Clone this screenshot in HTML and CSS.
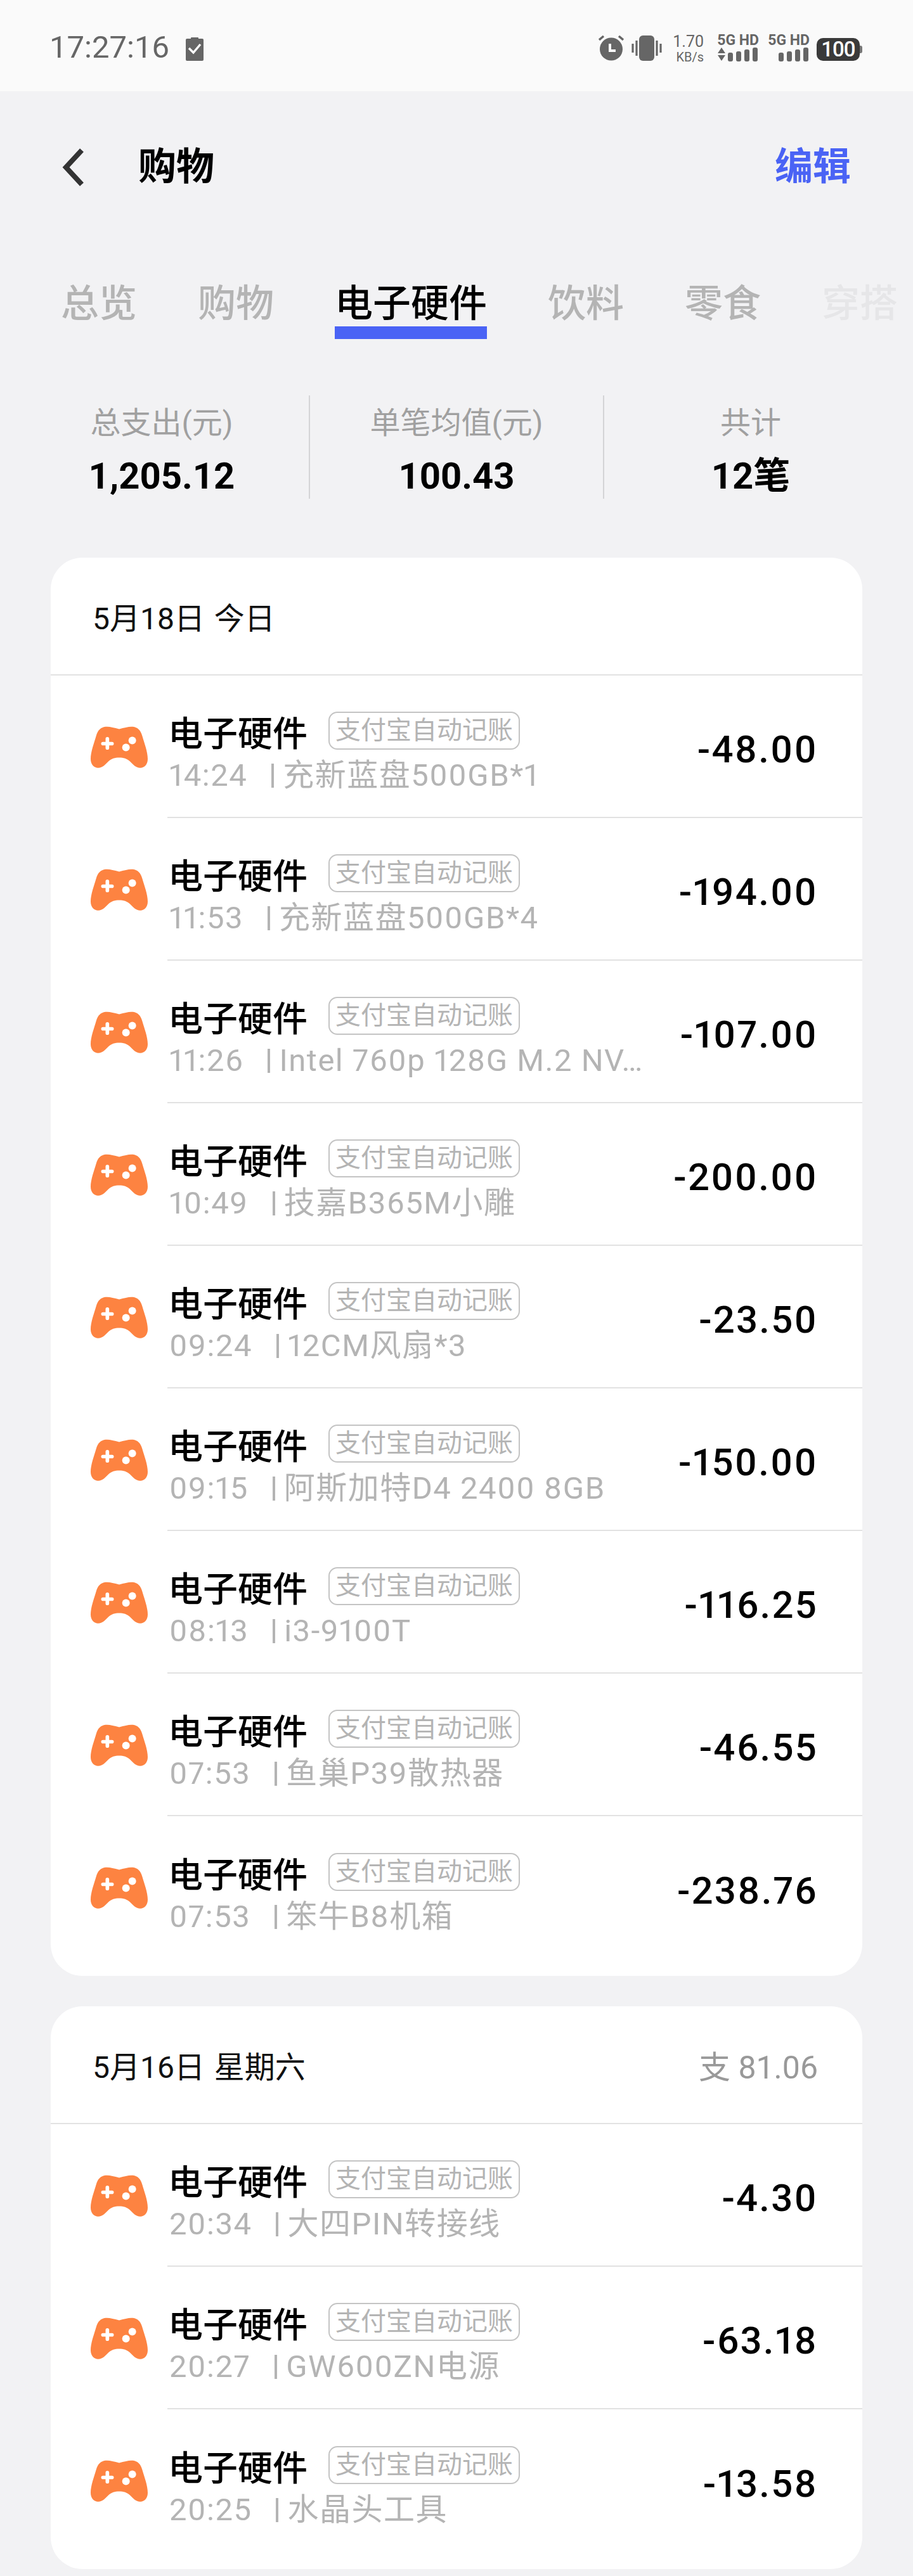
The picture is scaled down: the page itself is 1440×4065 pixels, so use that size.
FILE: index.html
```html
<!DOCTYPE html>
<html lang="zh-CN">
<head>
<meta charset="utf-8">
<title>购物</title>
<link rel="stylesheet" href="styles.css">
</head>
<body>
<div class="status">
  <div class="status-left">
    <span class="clock">17:27:16</span>
    <svg class="ic-batcheck" viewBox="0 0 28 40"><path fill="#666" d="M9 3h10a1 1 0 0 1 1 1v1h6a2 2 0 0 1 2 2v31a2 2 0 0 1-2 2H2a2 2 0 0 1-2-2V7a2 2 0 0 1 2-2h6V4a1 1 0 0 1 1-1z"/><path fill="none" stroke="#fff" stroke-width="3.4" d="M5 20l7 7 11-13"/></svg>
  </div>
  <div class="status-right">
    <svg class="ic-alarm" viewBox="0 0 40 40"><circle cx="20" cy="21.500" r="18" fill="#666"/><path stroke="#666" stroke-width="3.400" d="M1 7l7-6M39 7l-7-6"/><path fill="none" stroke="#fff" stroke-width="4" d="M18 13v11h9"/></svg>
    <svg class="ic-vib" viewBox="0 0 48 40"><rect x="12" y="0" width="24" height="40" rx="6" fill="#666"/><path stroke="#666" stroke-width="3.200" d="M2 13v14M8 8v24M40 8v24M46 13v14"/></svg>
    <div class="speed"><span class="speed-v">1.70</span><span class="speed-u">KB/s</span></div>
    <div class="sig">
      <span class="sig-t">5G HD</span>
      <svg class="ic-bars" viewBox="0 0 66 22"><path fill="#666" d="M7 0l6 9H1zM7 21l6-9H1z"/><rect x="17" y="8" width="8" height="14" rx="3" fill="#666"/><rect x="30" y="6" width="8" height="16" rx="3" fill="#666"/><rect x="43" y="3" width="8" height="19" rx="3" fill="#666"/><rect x="56" y="0" width="8" height="22" rx="3" fill="#666"/></svg>
    </div>
    <div class="sig sig-b">
      <span class="sig-t">5G HD</span>
      <svg class="ic-bars" viewBox="0 0 66 22"><rect x="17" y="8" width="8" height="14" rx="3" fill="#666"/><rect x="30" y="6" width="8" height="16" rx="3" fill="#666"/><rect x="43" y="3" width="8" height="19" rx="3" fill="#666"/><rect x="56" y="0" width="8" height="22" rx="3" fill="#666"/></svg>
    </div>
    <div class="battery"><span class="battery-v">100</span></div>
  </div>
</div>

<div class="nav">
  <svg class="ic-back" viewBox="0 0 40 68"><path fill="none" stroke="#333" stroke-width="8" stroke-linejoin="miter" d="M33 7L8 34l25 27"/></svg>
  <span class="nav-title">购物</span>
  <span class="nav-edit">编辑</span>
</div>

<div class="tabs">
  <span class="tab">总览</span>
  <span class="tab">购物</span>
  <span class="tab tab-on">电子硬件</span>
  <span class="tab">饮料</span>
  <span class="tab">零食</span>
  <span class="tab tab-fade">穿搭</span>
</div>

<div class="stats">
  <div class="stat"><div class="stat-l">总支出(元)</div><div class="stat-v">1,205.12</div></div>
  <div class="stat"><div class="stat-l">单笔均值(元)</div><div class="stat-v">100.43</div></div>
  <div class="stat"><div class="stat-l">共计</div><div class="stat-v">12笔</div></div>
</div>

<section class="card">
  <header class="card-h"><span class="date">5月18日 今日</span></header>
  <div class="row"><svg class="pad" viewBox="0 0 270 197"><use href="#gamepad"/></svg><div class="main"><div class="body"><div class="t-line"><span class="t">电子硬件</span><span class="badge">支付宝自动记账</span></div><div class="sub"><span>14:24</span><i class="pipe"></i><span>充新蓝盘500GB*1</span></div></div><span class="amt">-48.00</span></div></div>
  <div class="row"><svg class="pad" viewBox="0 0 270 197"><use href="#gamepad"/></svg><div class="main"><div class="body"><div class="t-line"><span class="t">电子硬件</span><span class="badge">支付宝自动记账</span></div><div class="sub"><span>11:53</span><i class="pipe"></i><span>充新蓝盘500GB*4</span></div></div><span class="amt">-194.00</span></div></div>
  <div class="row"><svg class="pad" viewBox="0 0 270 197"><use href="#gamepad"/></svg><div class="main"><div class="body"><div class="t-line"><span class="t">电子硬件</span><span class="badge">支付宝自动记账</span></div><div class="sub"><span>11:26</span><i class="pipe"></i><span>Intel 760p 128G M.2 NV…</span></div></div><span class="amt">-107.00</span></div></div>
  <div class="row"><svg class="pad" viewBox="0 0 270 197"><use href="#gamepad"/></svg><div class="main"><div class="body"><div class="t-line"><span class="t">电子硬件</span><span class="badge">支付宝自动记账</span></div><div class="sub"><span>10:49</span><i class="pipe"></i><span>技嘉B365M小雕</span></div></div><span class="amt">-200.00</span></div></div>
  <div class="row"><svg class="pad" viewBox="0 0 270 197"><use href="#gamepad"/></svg><div class="main"><div class="body"><div class="t-line"><span class="t">电子硬件</span><span class="badge">支付宝自动记账</span></div><div class="sub"><span>09:24</span><i class="pipe"></i><span>12CM风扇*3</span></div></div><span class="amt">-23.50</span></div></div>
  <div class="row"><svg class="pad" viewBox="0 0 270 197"><use href="#gamepad"/></svg><div class="main"><div class="body"><div class="t-line"><span class="t">电子硬件</span><span class="badge">支付宝自动记账</span></div><div class="sub"><span>09:15</span><i class="pipe"></i><span>阿斯加特D4 2400 8GB</span></div></div><span class="amt">-150.00</span></div></div>
  <div class="row"><svg class="pad" viewBox="0 0 270 197"><use href="#gamepad"/></svg><div class="main"><div class="body"><div class="t-line"><span class="t">电子硬件</span><span class="badge">支付宝自动记账</span></div><div class="sub"><span>08:13</span><i class="pipe"></i><span>i3-9100T</span></div></div><span class="amt">-116.25</span></div></div>
  <div class="row"><svg class="pad" viewBox="0 0 270 197"><use href="#gamepad"/></svg><div class="main"><div class="body"><div class="t-line"><span class="t">电子硬件</span><span class="badge">支付宝自动记账</span></div><div class="sub"><span>07:53</span><i class="pipe"></i><span>鱼巢P39散热器</span></div></div><span class="amt">-46.55</span></div></div>
  <div class="row"><svg class="pad" viewBox="0 0 270 197"><use href="#gamepad"/></svg><div class="main"><div class="body"><div class="t-line"><span class="t">电子硬件</span><span class="badge">支付宝自动记账</span></div><div class="sub"><span>07:53</span><i class="pipe"></i><span>笨牛B8机箱</span></div></div><span class="amt">-238.76</span></div></div>
</section>

<section class="card">
  <header class="card-h"><span class="date">5月16日 星期六</span><span class="day-sum">支 81.06</span></header>
  <div class="row"><svg class="pad" viewBox="0 0 270 197"><use href="#gamepad"/></svg><div class="main"><div class="body"><div class="t-line"><span class="t">电子硬件</span><span class="badge">支付宝自动记账</span></div><div class="sub"><span>20:34</span><i class="pipe"></i><span>大四PIN转接线</span></div></div><span class="amt">-4.30</span></div></div>
  <div class="row"><svg class="pad" viewBox="0 0 270 197"><use href="#gamepad"/></svg><div class="main"><div class="body"><div class="t-line"><span class="t">电子硬件</span><span class="badge">支付宝自动记账</span></div><div class="sub"><span>20:27</span><i class="pipe"></i><span>GW600ZN电源</span></div></div><span class="amt">-63.18</span></div></div>
  <div class="row"><svg class="pad" viewBox="0 0 270 197"><use href="#gamepad"/></svg><div class="main"><div class="body"><div class="t-line"><span class="t">电子硬件</span><span class="badge">支付宝自动记账</span></div><div class="sub"><span>20:25</span><i class="pipe"></i><span>水晶头工具</span></div></div><span class="amt">-13.58</span></div></div>
</section>

<svg class="defs" width="0" height="0"><defs><g id="gamepad">
  <path fill="#fd8341" d="M70 2C88 0 108 6 135 13C162 6 182 0 200 2C222 5 236 18 244 45C254 80 270 120 270 155C270 182 252 197 235 197C214 197 200 180 186 166C172 153 155 148 135 148C115 148 98 153 84 166C70 180 56 197 35 197C18 197 0 182 0 155C0 120 16 80 26 45C34 18 48 5 70 2Z"/>
  <path fill="none" stroke="#fff" stroke-width="17" stroke-linecap="round" d="M79 59v43M58 82h43"/>
  <circle cx="197" cy="67" r="18" fill="#fff"/><circle cx="167" cy="100" r="18" fill="#fff"/>
</g></defs></svg>
</body>
</html>
```

FILE: styles.css
```css
* { box-sizing: border-box; }
html, body { margin: 0; padding: 0; }
body {
  width: 1440px;
  min-height: 4065px;
  background: #f2f2f4;
  font-family: Roboto, "Noto Sans CJK SC", sans-serif;
  color: #000;
  overflow-x: hidden;
}
.defs { position: absolute; }

/* status bar */
.status {
  height: 144px;
  background: #fafafa;
  display: flex;
  justify-content: space-between;
  align-items: flex-start;
  padding: 50px 80px 0 78px;
}
.status-left { display: flex; align-items: center; height: 50px; gap: 26px; }
.clock { font-size: 49px; line-height: 50px; color: #666; }
.ic-batcheck { width: 28px; height: 40px; margin-top: 2px; }
.status-right { display: flex; align-items: flex-start; }
.ic-alarm { width: 40px; height: 40px; margin-top: 6px; }
.ic-vib { width: 48px; height: 40px; margin: 6px 0 0 12px; }
.speed { display: flex; flex-direction: column; align-items: flex-end; width: 48px; margin: 3px 0 0 18px; color: #666; }
.speed-v { font-size: 25px; line-height: 25px; }
.speed-u { font-size: 20px; line-height: 20px; margin-top: 2px; }
.sig { display: flex; flex-direction: column; align-items: flex-end; width: 66px; margin: 2px 0 0 21px; }
.sig-b { margin-left: 14px; }
.sig-t { font-size: 23px; line-height: 23px; font-weight: 700; color: #666; white-space: nowrap; }
.ic-bars { width: 66px; height: 22px; margin-top: 0; }
.battery {
  position: relative;
  width: 68px;
  height: 36px;
  margin: 10px 4px 0 11px;
  background: #3a3a3a;
  border-radius: 10px;
  display: flex;
  align-items: center;
  justify-content: center;
}
.battery::after {
  content: "";
  position: absolute;
  right: -4px;
  top: 12px;
  width: 4px;
  height: 12px;
  background: #777;
  border-radius: 0 3px 3px 0;
}
.battery-v { color: #fff; font-size: 33px; line-height: 36px; font-weight: 500; letter-spacing: -1px; }

/* nav */
.nav {
  height: 240px;
  display: flex;
  align-items: center;
  padding: 0 98px 0 96px;
}
.ic-back { width: 40px; height: 68px; }
.nav-title { font-size: 60px; line-height: 80px; font-weight: 700; margin-left: 82px; }
.nav-edit { font-size: 60px; line-height: 80px; font-weight: 700; color: #4a63f5; margin-left: auto; }

/* tabs */
.tabs {
  display: flex;
  gap: 96px;
  padding-left: 96px;
  margin-top: 60px;
  height: 91px;
  overflow: hidden;
}
.tab { font-size: 60px; line-height: 72px; font-weight: 500; color: #b4b4b4; white-space: nowrap; height: 91px; }
.tab-on { color: #000; border-bottom: 20px solid #4a63f5; }
.tab-fade { color: #e6e6e8; }

/* summary */
.stats {
  display: grid;
  grid-template-columns: repeat(3, 464px);
  padding-left: 23px;
  margin-top: 89px;
  height: 160px;
}
.stat { text-align: center; border-left: 2px solid #d4d4d6; }
.stat:first-child { border-left: 0; }
.stat-l { font-size: 48px; line-height: 60px; color: #a0a0a0; margin-top: 14px; }
.stat-v { font-size: 58px; line-height: 72px; font-weight: 700; margin-top: 17px; }

/* cards */
.card {
  margin: 96px 80px 0;
  padding-bottom: 27px;
  background: #fff;
  border-radius: 50px;
}
.card + .card { margin-top: 48px; }
.card-h {
  height: 186px;
  display: flex;
  align-items: center;
  justify-content: space-between;
  padding: 0 70px 0 66px;
  border-bottom: 2px solid #e2e2e2;
}
.date { font-size: 48px; color: #111; word-spacing: 3px; }
.day-sum { font-size: 50px; color: #999; }

.row { display: flex; align-items: center; height: 225px; padding-left: 63px; }
.pad { width: 90px; height: 66px; flex: none; margin-right: 31px; }
.main {
  flex: 1;
  min-width: 0;
  height: 225px;
  display: flex;
  align-items: center;
  justify-content: space-between;
  padding: 0 70px 0 1px;
  border-bottom: 2px solid #e2e2e2;
}
.row:last-child .main { border-bottom: 0; }
.body { width: 770px; margin-top: 20px; }
.t-line { display: flex; align-items: center; height: 72px; }
.t { font-size: 55px; line-height: 72px; font-weight: 500; white-space: nowrap; }
.badge {
  margin: 0 0 10px 33px;
  height: 60px;
  width: 302px;
  border: 2px solid #c4c4c4;
  border-radius: 14px;
  font-size: 40px;
  line-height: 56px;
  color: #b4b4b4;
  text-align: center;
  white-space: nowrap;
}
.sub {
  height: 60px;
  padding-left: 2px;
  font-size: 49px;
  line-height: 60px;
  color: #b4b4b4;
  letter-spacing: 1.500px;
  white-space: nowrap;
  font-variant-numeric: proportional-nums;
}
.pipe {
  display: inline-block;
  width: 4px;
  height: 38px;
  margin: 0 14px 0 38px;
  background: #b4b4b4;
  vertical-align: -3px;
}
.amt { font-size: 60px; font-weight: 500; letter-spacing: 2.200px; margin: 10px 0 0 0; white-space: nowrap; font-variant-numeric: proportional-nums; }
```
